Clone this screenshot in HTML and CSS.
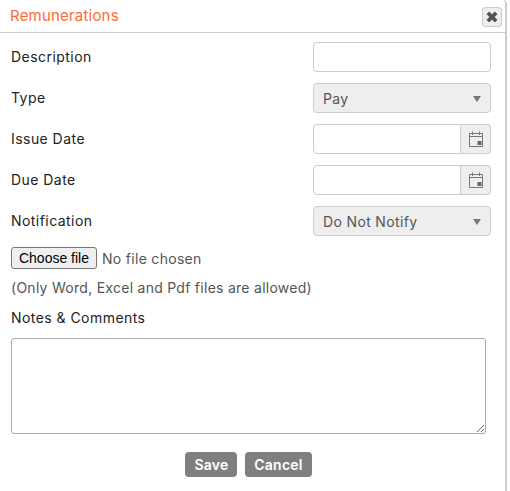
FILE: index.html
```html
<!DOCTYPE html>
<html lang="en">
<head>
    <meta charset="UTF-8">
    <title>Remunerations</title>
    <link rel="stylesheet" href="styles.css">
</head>
<body>
    <div class="dialog">
        <div class="dialog-header">
            <span class="dialog-title">Remunerations</span>
            <button class="close-btn" type="button" aria-label="Close">
                <svg width="12" height="12" viewBox="0 0 12 12"><path d="M1 3.2 3.2 1 6 3.8 8.8 1 11 3.2 8.2 6 11 8.8 8.8 11 6 8.2 3.2 11 1 8.8 3.8 6z" fill="#555" stroke="#555" stroke-linejoin="round"/></svg>
            </button>
        </div>
        <form class="dialog-body">
            <div class="row">
                <label>Description</label>
                <input class="field" type="text">
            </div>
            <div class="row">
                <label>Type</label>
                <div class="select-wrap">
                    <select class="field select"><option>Pay</option></select>
                </div>
            </div>
            <div class="row">
                <label>Issue Date</label>
                <div class="date-group">
                    <input class="field date-input" type="text">
                    <span class="date-addon">
                        <svg width="16" height="16" viewBox="0 0 16 16" fill="none"><path d="M1.5 2.5h13v13h-13zM1.5 5.5h13M4.5 .5v3.5M11.5 .5v3.5" stroke="#6f7f6f"/><rect x="9.5" y="10" width="4" height="4" fill="#666"/></svg>
                    </span>
                </div>
            </div>
            <div class="row">
                <label>Due Date</label>
                <div class="date-group">
                    <input class="field date-input" type="text">
                    <span class="date-addon">
                        <svg width="16" height="16" viewBox="0 0 16 16" fill="none"><path d="M1.5 2.5h13v13h-13zM1.5 5.5h13M4.5 .5v3.5M11.5 .5v3.5" stroke="#6f7f6f"/><rect x="9.5" y="10" width="4" height="4" fill="#666"/></svg>
                    </span>
                </div>
            </div>
            <div class="row">
                <label>Notification</label>
                <div class="select-wrap">
                    <select class="field select"><option>Do Not Notify</option></select>
                </div>
            </div>
            <div class="file-row">
                <button class="file-btn" type="button">Choose file</button>
                <span class="file-name">No file chosen</span>
            </div>
            <p class="file-note">(Only Word, Excel and Pdf files are allowed)</p>
            <label class="notes-label">Notes &amp; Comments</label>
            <textarea class="notes"></textarea>
            <div class="actions">
                <button class="btn" type="button">Save</button>
                <button class="btn" type="button">Cancel</button>
            </div>
        </form>
    </div>
</body>
</html>
```

FILE: styles.css
```css
html, body {
    height: 100%;
}
body {
    margin: 0;
    background-color: #fff;
    font-family: Inter, 'Liberation Sans', sans-serif;
    font-size: 14px;
    color: #333;
    overflow: hidden;
}
.dialog {
    width: 505px;
    height: 100%;
    border-right: 2px solid #ccc;
    border-top-right-radius: 4px;
}
.dialog-header {
    height: 32px;
    border-bottom: 1px solid #ccc;
    padding: 0 3px 0 10px;
    display: flex;
    justify-content: space-between;
    align-items: center;
}
.dialog-title {
    color: #ff6b35;
    font-size: 15px;
    letter-spacing: 0.2px;
    margin-bottom: 1px;
}
.close-btn {
    width: 20px;
    height: 20px;
    padding: 0;
    margin-top: 1px;
    border: 1px solid #ccc;
    border-radius: 3px;
    background-color: #eee;
    display: flex;
    align-items: center;
    justify-content: center;
}
.dialog-body {
    padding: 9px 14px 0 11px;
    display: flex;
    flex-direction: column;
}
.row {
    height: 30px;
    margin-bottom: 11px;
    display: flex;
    justify-content: space-between;
    align-items: center;
    letter-spacing: 0.45px;
}
.row label {
    margin-bottom: 2px;
    color: #222;
}
.field {
    width: 178px;
    height: 30px;
    box-sizing: border-box;
    border: 1px solid #ccc;
    border-radius: 4px;
    background-color: #fff;
    font: inherit;
    outline: none;
}
.select-wrap {
    position: relative;
}
.select-wrap::after {
    content: "";
    position: absolute;
    right: 10px;
    top: 13px;
    border-left: 4px solid transparent;
    border-right: 4px solid transparent;
    border-top: 6px solid #777;
}
.select {
    display: block;
    appearance: none;
    padding: 0 9px;
    background-color: #eee;
    color: #555;
    letter-spacing: 0.35px;
}
.date-group {
    width: 178px;
    display: flex;
}
.date-input {
    flex: 1;
    width: 0;
    border-radius: 4px 0 0 4px;
}
.date-addon {
    width: 30px;
    height: 30px;
    box-sizing: border-box;
    border: 1px solid #ccc;
    border-left: none;
    border-radius: 0 4px 4px 0;
    background-color: #eee;
    display: flex;
    align-items: center;
    justify-content: center;
}
.file-row {
    height: 22px;
    display: flex;
    align-items: center;
    gap: 5px;
}
.file-btn {
    width: 86px;
    height: 22px;
    padding: 0;
    border: 1px solid #767676;
    border-radius: 3px;
    background-color: #efefef;
    color: #000;
    font-family: 'Liberation Sans', sans-serif;
    font-size: 14px;
}
.file-name {
    color: #555;
    letter-spacing: 0.3px;
}
.file-note {
    margin: 10px 0 0;
    line-height: 17px;
    color: #555;
    letter-spacing: 0.27px;
}
.notes-label {
    margin-top: 13px;
    line-height: 17px;
    color: #222;
    letter-spacing: 0.45px;
}
.notes {
    height: 96px;
    box-sizing: border-box;
    margin-top: 12px;
    border: 1px solid #aaa;
    border-radius: 3px;
    width: 475px;
}
.actions {
    margin-top: 18px;
    padding-right: 5px;
    display: flex;
    justify-content: center;
    gap: 8px;
}
.btn {
    height: 25px;
    padding: 0 9px;
    border: none;
    border-radius: 4px;
    background-color: #7f7f7f;
    color: #fff;
    font: inherit;
    font-weight: 600;
    letter-spacing: 0.2px;
}
```
